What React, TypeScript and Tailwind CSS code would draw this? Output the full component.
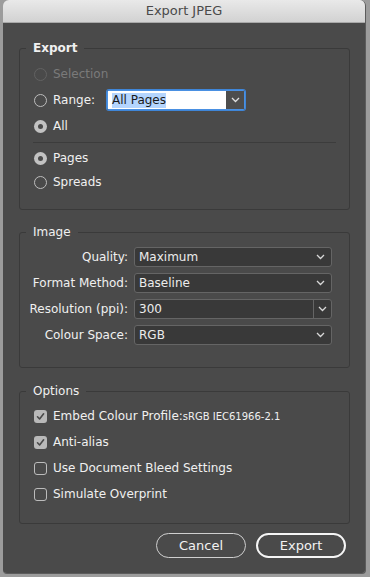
import React from 'react';

const font = { fontFamily: '"DejaVu Sans", "Liberation Sans", sans-serif' };

function Radio({ checked, disabled }: { checked?: boolean; disabled?: boolean }) {
  if (checked) {
    return (
      <span className="w-[13px] h-[13px] rounded-full bg-[#c2c2c2] flex items-center justify-center shrink-0">
        <span className="w-[5px] h-[5px] rounded-full bg-[#4a4a4a]" />
      </span>
    );
  }
  return (
    <span
      className={
        disabled
          ? 'w-[13px] h-[13px] rounded-full border border-[#626262] shrink-0'
          : 'w-[13px] h-[13px] rounded-full border border-[#bdbdbd] shrink-0'
      }
    />
  );
}

function Checkbox({ checked }: { checked?: boolean }) {
  if (checked) {
    return (
      <span className="w-[13px] h-[13px] rounded-[3px] bg-[#b9b9b9] flex items-center justify-center shrink-0">
        <svg width="9" height="9" viewBox="0 0 9 9">
          <path d="M1.5 4.8 L3.6 7 L7.6 1.8" fill="none" stroke="#4a4a4a" strokeWidth="1.6" strokeLinecap="round" strokeLinejoin="round" />
        </svg>
      </span>
    );
  }
  return <span className="w-[13px] h-[13px] rounded-[3px] border border-[#bcbcbc] shrink-0" />;
}

function Chevron({ color = '#d8d8d8' }: { color?: string }) {
  return (
    <svg width="9" height="6" viewBox="0 0 9 6">
      <path d="M1 1 L4.5 4.5 L8 1" fill="none" stroke={color} strokeWidth="1.3" />
    </svg>
  );
}

function Select({ value, combo }: { value: string; combo?: boolean }) {
  return (
    <div className="h-[20px] flex items-stretch rounded-[3px] border border-[#656565] bg-[#393939]">
      <span className="flex-1 flex items-center pl-[4px] text-[#ececec]">{value}</span>
      <span
        className={
          combo
            ? 'w-[18px] flex items-center justify-center border-l border-[#656565]'
            : 'w-[22px] flex items-center justify-center'
        }
      >
        <Chevron />
      </span>
    </div>
  );
}

function Group({ title, bold, className, children }: { title: string; bold?: boolean; className: string; children: React.ReactNode }) {
  return (
    <div className={`relative border border-[#3a3a3a] rounded-[3px] ${className}`}>
      <span
        className={`absolute -top-[9px] left-[6px] px-[7px] bg-[#4a4a4a] leading-[17px] text-[#f0f0f0] ${bold ? 'font-bold' : ''}`}
      >
        {title}
      </span>
      {children}
    </div>
  );
}

export default function App() {
  return (
    <div className="w-[370px] h-[577px] bg-[#9c9c9c] pl-[3px] pr-[4px] pb-[3px] text-[12px]" style={font}>
      <div className="h-full flex flex-col rounded-t-[6px] rounded-b-[4px] overflow-hidden border-r border-b border-[#5c5c5c]">
        <div className="h-[23px] shrink-0 flex items-center justify-center bg-gradient-to-b from-[#e9e9e9] to-[#d2d2d2] border-b border-[#a9a9a9] text-[13px] text-[#4a4a4a]">
          Export JPEG
        </div>
        <div className="flex-1 bg-[#4a4a4a] pt-[25px] pl-[16px] pr-[15px] flex flex-col">
          <Group title="Export" bold className="pt-[12px] pb-[15px]">
            <div className="pl-[14px] flex flex-col">
              <div className="h-[26px] flex items-center gap-[6px] text-[#7a7a7a]">
                <Radio disabled />
                <span>Selection</span>
              </div>
              <div className="h-[26px] flex items-center text-[#f0f0f0]">
                <Radio />
                <span className="ml-[6px] w-[54px]">Range:</span>
                <div className="w-[138px] h-[20px] flex items-stretch rounded-[2px] border border-[#4a90e2] shadow-[0_0_0_1px_#3f86d8]">
                  <span className="flex-1 bg-white flex items-center pl-[4px]">
                    <span className="bg-[#b4d5fe] text-[#1a1a1a] leading-[15px]">All Pages</span>
                  </span>
                  <span className="w-[18px] bg-[#4d4d4d] flex items-center justify-center">
                    <Chevron color="#e0e0e0" />
                  </span>
                </div>
              </div>
              <div className="h-[26px] flex items-center gap-[6px] text-[#f0f0f0]">
                <Radio checked />
                <span>All</span>
              </div>
            </div>
            <div className="mx-[13px] mt-[3px] h-px bg-[#3c3c3c]" />
            <div className="pl-[14px] mt-[3px] flex flex-col text-[#f0f0f0]">
              <div className="h-[24px] flex items-center gap-[6px]">
                <Radio checked />
                <span>Pages</span>
              </div>
              <div className="h-[24px] flex items-center gap-[6px]">
                <Radio />
                <span>Spreads</span>
              </div>
            </div>
          </Group>

          <Group title="Image" className="mt-[22px] pt-[14px] pb-[22px]">
            <div className="grid grid-cols-[108px_1fr] gap-x-[6px] gap-y-[6px] pr-[17px] items-center text-[#f0f0f0]">
              <span className="text-right">Quality:</span>
              <Select value="Maximum" />
              <span className="text-right">Format Method:</span>
              <Select value="Baseline" />
              <span className="text-right">Resolution (ppi):</span>
              <Select value="300" combo />
              <span className="text-right">Colour Space:</span>
              <Select value="RGB" />
            </div>
          </Group>

          <Group title="Options" className="mt-[23px] pt-[11px] pb-[16px]">
            <div className="pl-[14px] flex flex-col text-[#f0f0f0]">
              <div className="h-[26px] flex items-center gap-[6px]">
                <Checkbox checked />
                <span>
                  Embed Colour Profile:<span className="text-[10px]">sRGB IEC61966-2.1</span>
                </span>
              </div>
              <div className="h-[26px] flex items-center gap-[6px]">
                <Checkbox checked />
                <span>Anti-alias</span>
              </div>
              <div className="h-[26px] flex items-center gap-[6px]">
                <Checkbox />
                <span>Use Document Bleed Settings</span>
              </div>
              <div className="h-[26px] flex items-center gap-[6px]">
                <Checkbox />
                <span>Simulate Overprint</span>
              </div>
            </div>
          </Group>

          <div className="mt-[9px] flex justify-end gap-[10px] pr-[4px] text-[13px] text-[#f2f2f2]">
            <button className="w-[90px] h-[25px] rounded-full border border-[#cfcfcf]">Cancel</button>
            <button className="w-[90px] h-[25px] rounded-full border-2 border-[#f5f5f5]">Export</button>
          </div>
        </div>
      </div>
    </div>
  );
}
